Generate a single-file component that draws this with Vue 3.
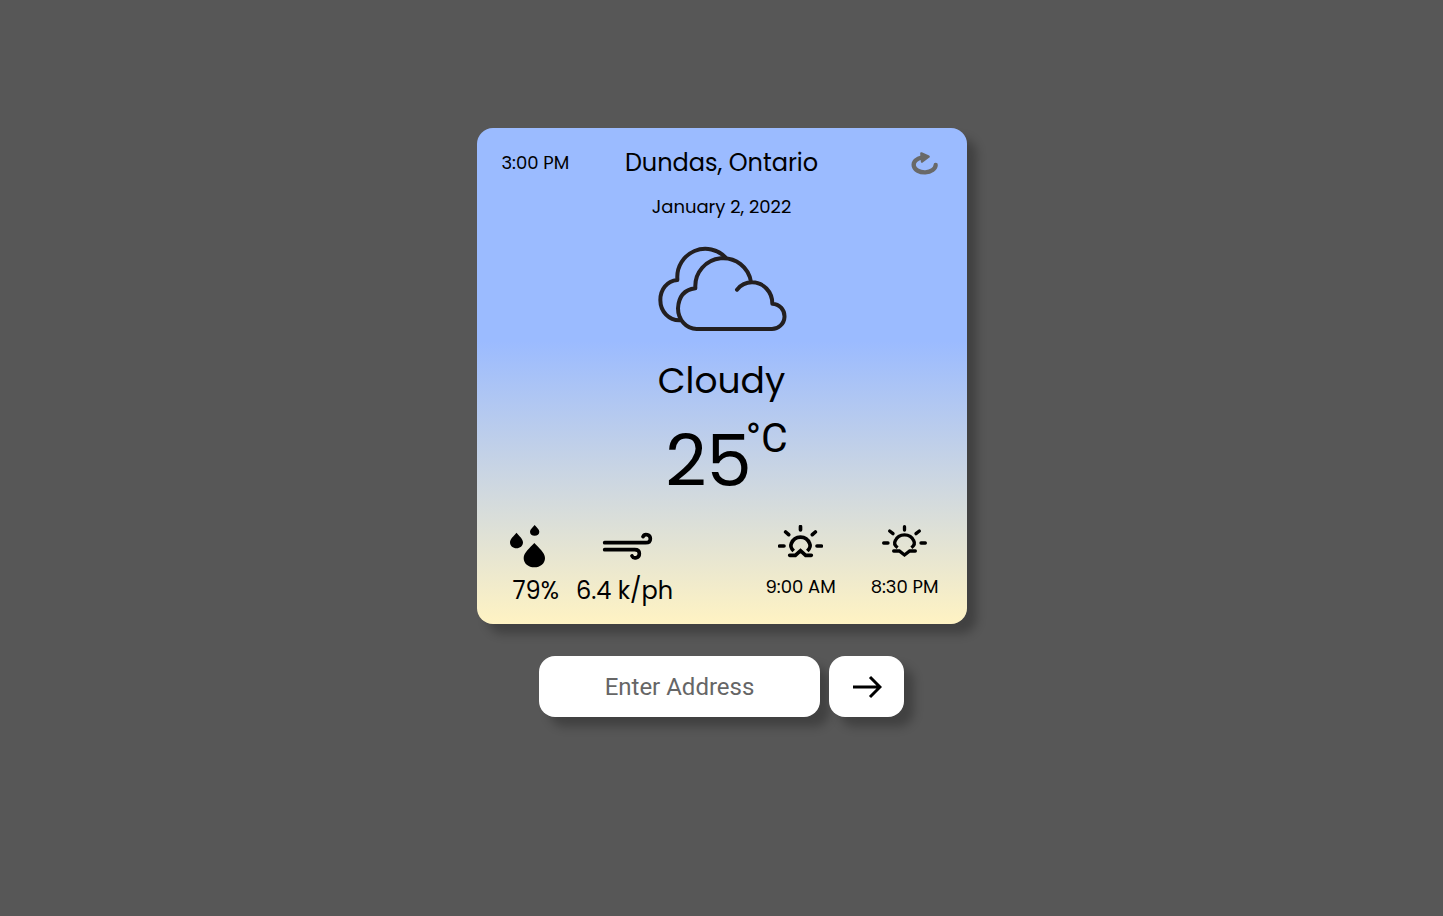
<script setup>
import { ref } from 'vue'

const address = ref('')
const weather = {
  time: '3:00 PM',
  place: 'Dundas, Ontario',
  date: 'January 2, 2022',
  condition: 'Cloudy',
  temperature: 25,
  humidity: '79%',
  wind: '6.4 k/ph',
  sunrise: '9:00 AM',
  sunset: '8:30 PM',
}
</script>

<template>
  <main class="page">
    <section class="card">
      <header class="header">
        <time class="small">{{ weather.time }}</time>
        <h1 class="place">{{ weather.place }}</h1>
        <button class="refresh" type="button" aria-label="Refresh">
          <svg width="32" height="26" viewBox="30 31 96 78">
            <path d="M107 76 A33 23 0 1 1 66 53" fill="none" stroke="#696969" stroke-width="13" stroke-linecap="round" />
            <path d="M64 41 L86 51 L66 66 Z" fill="#696969" stroke="#696969" stroke-width="7" stroke-linejoin="round" />
          </svg>
        </button>
      </header>
      <p class="date small">{{ weather.date }}</p>

      <svg class="cloud" width="132" height="88" viewBox="48 30 396 264" aria-hidden="true">
        <g fill="none" stroke="#231f20" stroke-width="12" stroke-linecap="round" stroke-linejoin="round">
          <path d="M291 164 Q309 142 336 142 C370 142 397 170 397 206 A38 38 0 0 1 394 282 H170 A56 62 0 0 1 114 220 Q117 166 166 160 V157 A84 84 0 0 1 333 141" />
          <path d="M258 69 A84 84 0 0 0 112 130 V135 C80 138 61 164 61 195 C61 230 87 257 120 256" />
        </g>
      </svg>

      <p class="condition">{{ weather.condition }}</p>
      <p class="temperature"><span class="degrees">{{ weather.temperature }}</span><span class="unit">°C</span></p>

      <div class="stats">
        <div class="group metrics">
          <div class="stat start">
            <span class="icon">
              <svg width="35" height="43" viewBox="30 20 105 129" aria-hidden="true">
                <path d="M49.500 43 C58 53 69 62 69 72 C69 83 60 90 49.500 90 C39 90 30 83 30 72 C30 62 41 53 49.500 43 Z" />
                <path d="M104 20 C110 28 118 33 118 40 C118 48 112 52 104 52 C96 52 90 48 90 40 C90 33 98 28 104 20 Z" />
                <path d="M103 74 C116 88 135 103 135 119 C135 136 121 147 103 147 C85 147 71 136 71 119 C71 103 90 88 103 74 Z" />
              </svg>
            </span>
            <span class="value">{{ weather.humidity }}</span>
          </div>
          <div class="stat">
            <span class="icon middle">
              <svg width="56" height="30" viewBox="321 51 168 90" aria-hidden="true">
                <g fill="none" stroke="#000" stroke-width="11" stroke-linecap="round">
                  <path d="M344 83 H467 C477 83 481 78 481 71 C481 59 464 54 459 65" />
                  <path d="M344 104 H434 C444 104 448 109 448 116 C448 129 431 133 426 123" />
                </g>
              </svg>
            </span>
            <span class="value">{{ weather.wind }}</span>
          </div>
        </div>
        <div class="group sun">
          <div class="stat">
            <span class="icon">
              <svg width="45" height="33" viewBox="84 30 135 99" aria-hidden="true">
                <g fill="none" stroke="#000" stroke-width="11" stroke-linecap="round" stroke-linejoin="round">
                  <path d="M151.500 35 V45 M107 51 L116 59 M196 51 L187 59 M89 93 H102 M201 93 H214" />
                  <path d="M131 108 C122 99 121 92 124 86 C134 60 169 60 179 86 C182 92 181 99 172 108" stroke-linecap="butt" />
                  <path d="M119 121 H136 L151.500 107 L167 121 H184" stroke-linejoin="miter" />
                </g>
              </svg>
            </span>
            <span class="small">{{ weather.sunrise }}</span>
          </div>
          <div class="stat">
            <span class="icon">
              <svg width="45" height="33" viewBox="396 30 135 99" aria-hidden="true">
                <g fill="none" stroke="#000" stroke-width="10" stroke-linecap="round" stroke-linejoin="round">
                  <path d="M463.500 35 V45 M419 48 L429 56 M508 48 L498 56 M401 84 H414 M513 84 H526" />
                  <path d="M443 98 C433 91 432 84 436 77 C446 54 481 54 491 77 C495 84 494 91 484 98" stroke-linecap="butt" />
                  <path d="M431 108 H448 L463.500 120 L479 108 H496" stroke-linejoin="miter" />
                </g>
              </svg>
            </span>
            <span class="small">{{ weather.sunset }}</span>
          </div>
        </div>
      </div>
    </section>

    <form class="search" @submit.prevent>
      <input v-model="address" class="field" type="text" placeholder="Enter Address" aria-label="Enter Address" />
      <button class="go" type="submit" aria-label="Search">
        <svg width="30" height="24" viewBox="966 90 90 72">
          <path d="M969 126 H1050 M1020 96 L1050 126 L1020 156" fill="none" stroke="#000" stroke-width="9" />
        </svg>
      </button>
    </form>
  </main>
</template>

<style>
body {
  margin: 0;
  background: #575757;
}
</style>

<style scoped>
.page {
  box-sizing: border-box;
  min-height: 100vh;
  padding: 128px 16px 32px;
  display: flex;
  flex-direction: column;
  align-items: center;
  gap: 32px;
  color: #000;
  font-family: Poppins, Inter, sans-serif;
}

.card {
  box-sizing: border-box;
  width: 100%;
  max-width: 490px;
  padding: 17px 0 15px;
  display: flex;
  flex-direction: column;
  align-items: center;
  border-radius: 16px;
  background: linear-gradient(#9bbbff 43%, #fff3c3);
  box-shadow: 10px 10px 10px rgba(0, 0, 0, 0.25);
}

h1,
p {
  margin: 0;
  font-weight: 400;
}

.header {
  align-self: stretch;
  display: grid;
  grid-template-columns: 1fr auto 1fr;
  align-items: center;
  padding: 0 25px;
}

.place {
  font-size: 24px;
  line-height: 36px;
}

.small {
  font-size: 18px;
  line-height: 26px;
}

.refresh {
  justify-self: end;
  display: flex;
  padding: 0;
  border: 0;
  background: none;
  cursor: pointer;
}

.date {
  margin-top: 13px;
}

.cloud {
  margin-top: 25px;
}

.condition {
  margin-top: 21px;
  font-size: 36px;
  line-height: 54px;
}

.temperature {
  margin-top: 14px;
  padding-left: 10px;
  display: flex;
  align-items: flex-start;
}

.degrees {
  font-size: 72px;
  line-height: 78px;
}

.unit {
  margin-left: -6px;
  font-family: Roboto, sans-serif;
  font-size: 41px;
  line-height: 32px;
}

.stats {
  align-self: stretch;
  margin-top: 25px;
  padding: 0 28px 0 33px;
  display: flex;
  justify-content: space-between;
}

.group {
  display: flex;
}

.metrics {
  gap: 17px;
}

.sun {
  gap: 35px;
}

.stat {
  display: flex;
  flex-direction: column;
  align-items: center;
  gap: 4px;
}

.sun .stat {
  gap: 5px;
}

.start {
  align-items: flex-start;
}

.start .value {
  padding-left: 3px;
}

.icon {
  height: 44px;
  display: flex;
  align-items: flex-start;
}

.middle {
  align-items: center;
}

.value {
  font-size: 24px;
  line-height: 36px;
}

.search {
  display: flex;
  gap: 9px;
  max-width: 100%;
}

.field,
.go {
  box-sizing: border-box;
  height: 61px;
  border: 0;
  border-radius: 16px;
  background: #fff;
  box-shadow: 10px 10px 10px rgba(0, 0, 0, 0.25);
}

.field {
  width: 281px;
  min-width: 0;
  padding: 0 16px;
  text-align: center;
  font: 24px Roboto, sans-serif;
  color: #000;
}

.field::placeholder {
  color: #666;
  opacity: 1;
}

.go {
  width: 75px;
  padding: 0;
  display: flex;
  align-items: center;
  justify-content: center;
  cursor: pointer;
}
</style>
